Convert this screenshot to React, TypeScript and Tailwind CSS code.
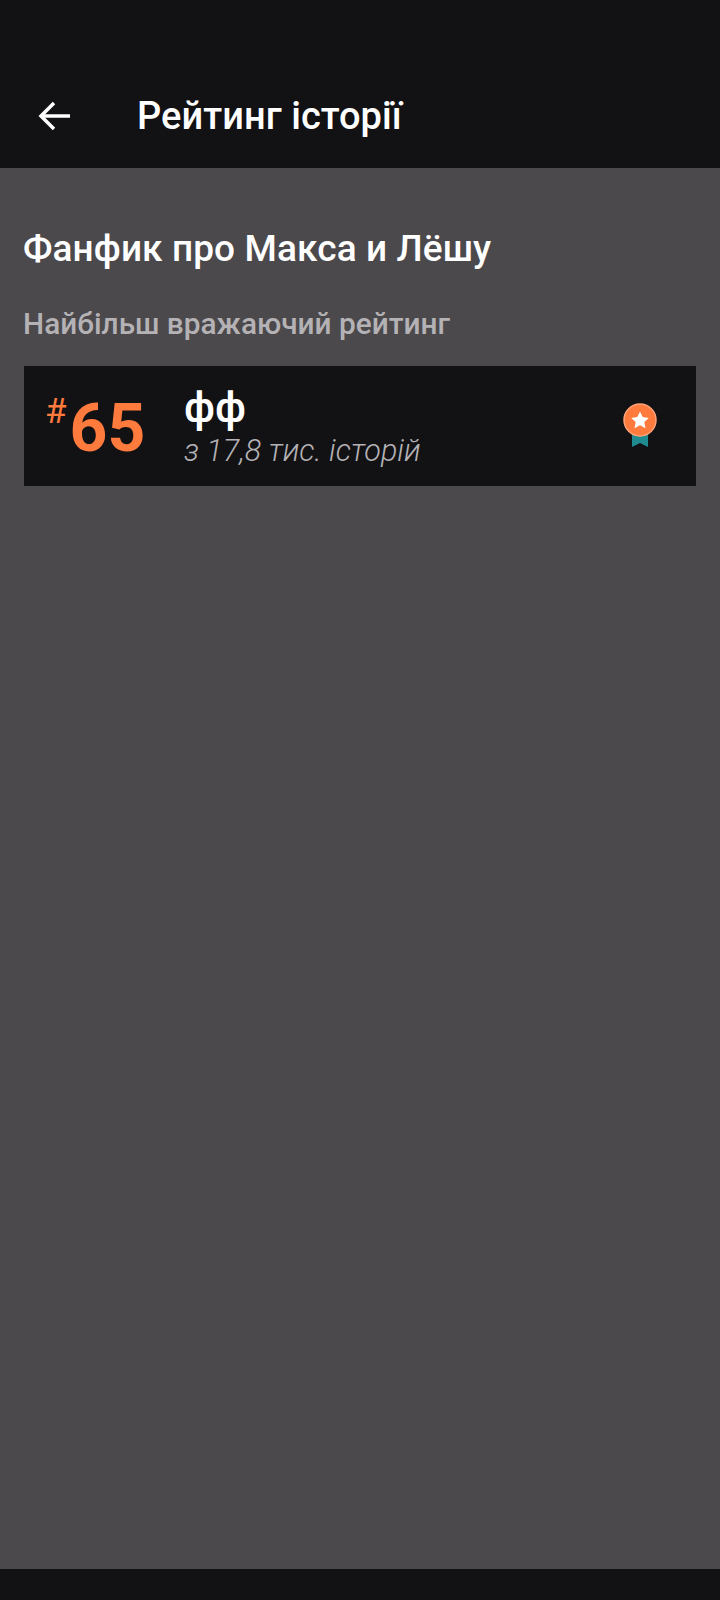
import React from "react";

// Orange medal with a teal ribbon
function Medal() {
  return (
    <svg width="36" height="46" viewBox="0 0 36 46" aria-hidden="true">
      <path d="M10 26h16v19l-8-4-8 4z" fill="#1f8a8f" />
      <circle cx="18" cy="18" r="16" fill="#ff7a3d" stroke="#ffa27a" strokeWidth="1.5" />
      <path
        d="M18 9.5l2.7 5.6 6.1.8-4.5 4.2 1.2 6.1-5.5-3-5.5 3 1.2-6.1-4.5-4.2 6.1-.8z"
        fill="#ffffff"
      />
    </svg>
  );
}

function App() {
  return (
    <div className="flex h-[1600px] w-[720px] flex-col bg-[#4b494c] font-['Roboto',sans-serif]">
      <header className="flex h-[168px] shrink-0 items-end bg-[#121114] pb-[27px]">
        <div className="flex h-[50px] w-[137px] items-center pl-[38px]">
          <svg width="32" height="32" viewBox="0 0 32 32" fill="none" aria-hidden="true">
            <path
              d="M32 16H3M16 3 3 16l13 13"
              stroke="#ffffff"
              strokeWidth="3.5"
            />
          </svg>
        </div>
        <h1 className="text-[38px] leading-[50px] font-medium tracking-[0.05px] text-white">Рейтинг історії</h1>
      </header>

      <main className="flex-1 px-6">
        <h2 className="mt-[56px] -ml-px text-[37px] leading-[50px] font-medium tracking-[0.1px] text-white">
          Фанфик про Макса и Лёшу
        </h2>
        <p className="mt-[30px] -ml-px text-[29.8px] leading-[40px] font-medium text-[#b4b2b5]">
          Найбільш вражаючий рейтинг
        </p>
        <div className="mt-[22px] flex h-[120px] items-center bg-[#121114] pr-[38px]">
          <div className="flex w-[160px] items-start pl-[21px]">
            <span className="mt-[6px] text-[35px] leading-[36px] font-normal text-[#ff7a3d]">#</span>
            <span className="mt-[5px] ml-[3px] text-[66px] leading-[72px] font-bold text-[#ff7a3d]">65</span>
          </div>
          <div className="mt-[4px] flex-1">
            <div className="text-[42.5px] leading-[44px] font-medium text-white">фф</div>
            <div className="text-[30.5px] leading-[41px] font-light text-[#b4b2b5] italic">
              з 17,8 тис. історій
            </div>
          </div>
          <div className="-mt-[2px] flex">
            <Medal />
          </div>
        </div>
      </main>

      <footer className="h-[31px] shrink-0 bg-[#121114]" />
    </div>
  );
}

export default App;
